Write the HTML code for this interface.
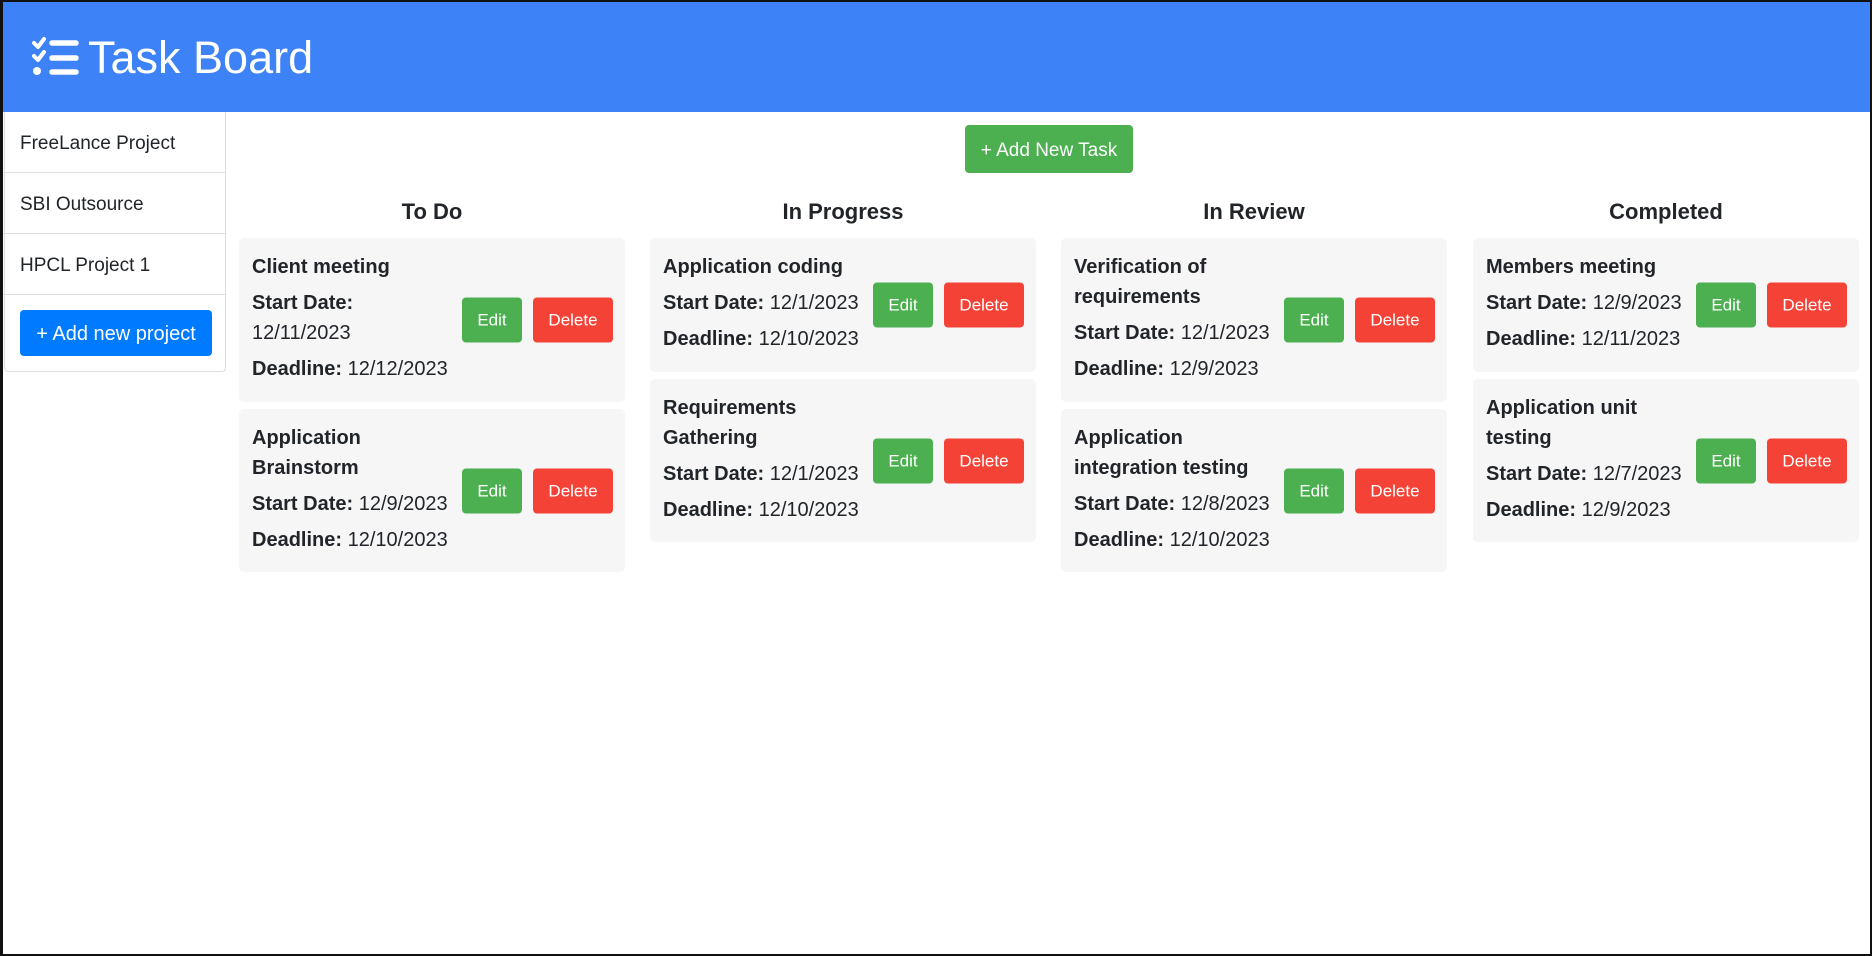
<!DOCTYPE html>
<html><head><meta charset="utf-8"><style>
*{box-sizing:border-box;margin:0;padding:0}
html,body{width:1872px;height:956px;overflow:hidden;background:#fff;font-family:"Liberation Sans",Arial,sans-serif;color:#212529}
.frame{position:absolute;left:0;top:0;width:1872px;height:956px;border-top:2px solid #111;border-left:3px solid #111;border-bottom:2px solid #111;border-right:2px solid #111;pointer-events:none;z-index:10}
.hdr{position:absolute;left:0;top:0;width:1872px;height:112px;background:#3d82f6}
.hdr svg{position:absolute;left:32px;top:37px}
.hdr h1{position:absolute;left:88px;top:30px;font-size:45px;font-weight:400;color:#fff;line-height:56px}
.side{position:absolute;left:4px;top:112px;width:222px;height:260px;border:1px solid #ddd;border-top:none;border-radius:0 0 4px 4px}
.side .it{height:61px;border-bottom:1px solid #ddd;padding-left:15px;font-size:19px;line-height:64px}
.side .btn{position:absolute;left:15px;top:198px;width:192px;height:46px;background:#007bff;color:#fff;border-radius:4px;font-size:20px;text-align:center;line-height:48px}
.add{position:absolute;left:965px;top:125px;width:168px;height:48px;background:#4caf50;color:#fff;border-radius:4px;font-size:19px;text-align:center;line-height:52px}
.col{position:absolute;top:196px;width:386px}
.col h2{font-size:22px;font-weight:700;text-align:center;line-height:32px;height:42px}
.card{background:#f6f6f6;border-radius:5px;margin-bottom:7px;padding:14px 12px 0 13px;display:flex;align-items:center;position:relative}
.info{width:200px;font-size:20px;line-height:30px;align-self:flex-start}
.info p+p{margin-top:6px}
.info b{font-weight:700}
.bt{position:absolute;right:12px;top:50%;transform:translateY(-50%);display:flex;gap:11px}
.e,.d{height:45px;border-radius:4px;color:#fff;font-size:17px;line-height:45px;text-align:center}
.e{width:60px;background:#4caf50}
.d{width:80px;background:#f44336}
</style></head><body>
<div class="frame"></div>
<div class="hdr">
<svg width="48" height="40" viewBox="0 0 48 40" fill="none" stroke="#fff" stroke-linecap="round" stroke-linejoin="round">
<path d="M2 6 L6 10 L12 2" stroke-width="4"/>
<path d="M2 19 L6 23 L12 15" stroke-width="4"/>
<circle cx="5" cy="34" r="4" fill="#fff" stroke="none"/>
<path d="M20 6 H44 M20 21 H44 M20 35 H44" stroke-width="5.5"/>
</svg>
<h1>Task Board</h1>
</div>
<div class="side">
<div class="it">FreeLance Project</div>
<div class="it">SBI Outsource</div>
<div class="it">HPCL Project 1</div>
<div class="btn">+ Add new project</div>
</div>
<div class="add">+ Add New Task</div>

<div class="col" style="left:239px"><h2>To Do</h2>
<div class="card" style="height:164px"><div class="info"><p><b>Client meeting</b></p><p><b>Start Date:</b> 12/11/2023</p><p><b>Deadline:</b> 12/12/2023</p></div><div class="bt"><div class="e">Edit</div><div class="d">Delete</div></div></div>
<div class="card" style="height:163px"><div class="info"><p><b>Application Brainstorm</b></p><p><b>Start Date:</b> 12/9/2023</p><p><b>Deadline:</b> 12/10/2023</p></div><div class="bt"><div class="e">Edit</div><div class="d">Delete</div></div></div>
</div>

<div class="col" style="left:650px"><h2>In Progress</h2>
<div class="card" style="height:134px"><div class="info"><p><b>Application coding</b></p><p><b>Start Date:</b> 12/1/2023</p><p><b>Deadline:</b> 12/10/2023</p></div><div class="bt"><div class="e">Edit</div><div class="d">Delete</div></div></div>
<div class="card" style="height:163px"><div class="info"><p><b>Requirements Gathering</b></p><p><b>Start Date:</b> 12/1/2023</p><p><b>Deadline:</b> 12/10/2023</p></div><div class="bt"><div class="e">Edit</div><div class="d">Delete</div></div></div>
</div>

<div class="col" style="left:1061px"><h2>In Review</h2>
<div class="card" style="height:164px"><div class="info"><p><b>Verification of requirements</b></p><p><b>Start Date:</b> 12/1/2023</p><p><b>Deadline:</b> 12/9/2023</p></div><div class="bt"><div class="e">Edit</div><div class="d">Delete</div></div></div>
<div class="card" style="height:163px"><div class="info"><p><b>Application integration testing</b></p><p><b>Start Date:</b> 12/8/2023</p><p><b>Deadline:</b> 12/10/2023</p></div><div class="bt"><div class="e">Edit</div><div class="d">Delete</div></div></div>
</div>

<div class="col" style="left:1473px"><h2>Completed</h2>
<div class="card" style="height:134px"><div class="info"><p><b>Members meeting</b></p><p><b>Start Date:</b> 12/9/2023</p><p><b>Deadline:</b> 12/11/2023</p></div><div class="bt"><div class="e">Edit</div><div class="d">Delete</div></div></div>
<div class="card" style="height:163px"><div class="info"><p><b>Application unit testing</b></p><p><b>Start Date:</b> 12/7/2023</p><p><b>Deadline:</b> 12/9/2023</p></div><div class="bt"><div class="e">Edit</div><div class="d">Delete</div></div></div>
</div>
</body></html>
